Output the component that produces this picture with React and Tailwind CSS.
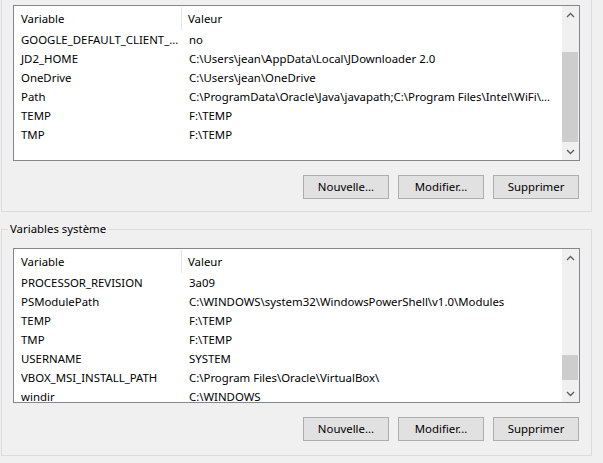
import React from "react";

const userVars = [
  ["GOOGLE_DEFAULT_CLIENT_...", "no"],
  ["JD2_HOME", "C:\\Users\\jean\\AppData\\Local\\JDownloader 2.0"],
  ["OneDrive", "C:\\Users\\jean\\OneDrive"],
  ["Path", "C:\\ProgramData\\Oracle\\Java\\javapath;C:\\Program Files\\Intel\\WiFi\\..."],
  ["TEMP", "F:\\TEMP"],
  ["TMP", "F:\\TEMP"],
];

const sysVars = [
  ["PROCESSOR_REVISION", "3a09"],
  ["PSModulePath", "C:\\WINDOWS\\system32\\WindowsPowerShell\\v1.0\\Modules"],
  ["TEMP", "F:\\TEMP"],
  ["TMP", "F:\\TEMP"],
  ["USERNAME", "SYSTEM"],
  ["VBOX_MSI_INSTALL_PATH", "C:\\Program Files\\Oracle\\VirtualBox\\"],
  ["windir", "C:\\WINDOWS"],
];

function Chevron({ up }) {
  return (
    <svg width="9" height="6" viewBox="0 0 9 6">
      <path
        d={up ? "M1 5 L4.5 1.5 L8 5" : "M1 1 L4.5 4.5 L8 1"}
        fill="none"
        stroke="#606060"
        strokeWidth="1.4"
      />
    </svg>
  );
}

function ListView({ rows, height, thumbTop, thumbHeight }) {
  return (
    <div
      className="flex border border-[#828790] bg-white overflow-hidden"
      style={{ height }}
    >
      <div className="flex-1 min-w-0 flex flex-col overflow-hidden">
        <div className="flex h-[24px] shrink-0 items-center pt-[1px]">
          <div className="w-[168px] shrink-0 h-full pl-[7px] flex items-center border-r border-[#e5e5e5]">
            Variable
          </div>
          <div className="pl-[6px] flex items-center">Valeur</div>
        </div>
        {rows.map(([k, v], i) => (
          <div key={i} className="flex h-[19px] shrink-0 items-center whitespace-nowrap pt-[1px]">
            <div className="w-[169px] shrink-0 pl-[7px]">{k}</div>
            <div className="pl-[6px]">{v}</div>
          </div>
        ))}
      </div>
      <div className="w-[17px] shrink-0 bg-[#f0f0f0] flex flex-col">
        <div className="h-[17px] flex items-center justify-center">
          <Chevron up />
        </div>
        <div className="flex-1 relative">
          <div
            className="absolute left-0 w-[16px] bg-[#cdcdcd]"
            style={{ top: thumbTop, height: thumbHeight }}
          />
        </div>
        <div className="h-[17px] flex items-center justify-center">
          <Chevron />
        </div>
      </div>
    </div>
  );
}

function Buttons() {
  return (
    <div className="flex justify-end gap-[9px] pr-[11px]">
      {["Nouvelle...", "Modifier...", "Supprimer"].map((t) => (
        <div
          key={t}
          className="w-[86px] h-[24px] bg-[#e1e1e1] border border-[#adadad] flex items-center justify-center"
        >
          {t}
        </div>
      ))}
    </div>
  );
}

export default function App() {
  return (
    <div
      className="w-[603px] h-[463px] bg-[#f0f0f0] overflow-hidden text-[11.4px] text-black"
      style={{ fontFamily: '"Noto Sans", "Open Sans", sans-serif' }}
    >
      <div className="ml-[1px] mt-[-20px] w-[591px] h-[232px] border border-[#dcdcdc] pt-[24px] pl-[11px]">
        <div className="w-[567px]">
          <ListView rows={userVars} height={156} thumbTop={29} thumbHeight={90} />
        </div>
        <div className="mt-[14px] w-[577px] flex justify-end">
          <Buttons />
        </div>
      </div>

      <div className="relative ml-[1px] mt-[17px] w-[591px] h-[227px] border border-[#dcdcdc] pt-[18px] pl-[11px]">
        <div className="absolute left-[6px] top-[-10px] px-[2px] bg-[#f0f0f0] leading-[18px]">
          Variables système
        </div>
        <div className="w-[567px]">
          <ListView rows={sysVars} height={155} thumbTop={89} thumbHeight={25} />
        </div>
        <div className="mt-[14px] w-[577px] flex justify-end">
          <Buttons />
        </div>
      </div>
    </div>
  );
}
